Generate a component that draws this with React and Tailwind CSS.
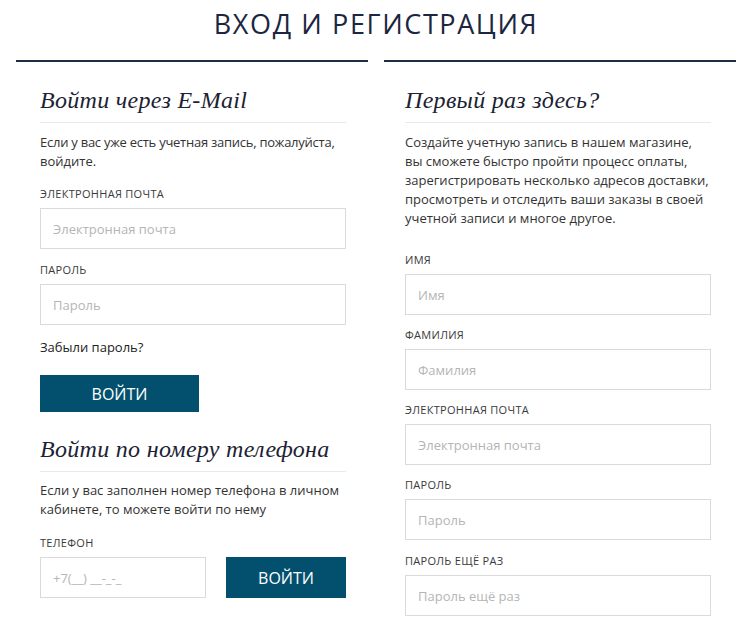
import React from "react";

const sans = "font-['Open_Sans',_'Liberation_Sans',_sans-serif]";
const serif = "font-['Liberation_Serif',_serif]";

const Label = ({ children, className = "" }) => (
  <div className={`text-[11px] leading-[13px] tracking-[0.3px] uppercase text-[#3a3a3a] mb-[8px] ${className}`}>{children}</div>
);

const Field = ({ placeholder, className = "" }) => (
  <input
    placeholder={placeholder}
    className={`h-[41px] border border-[#dadada] bg-white px-[12px] text-[13px] text-[#333] placeholder:text-[#b5b5b5] outline-none ${sans} ${className}`}
  />
);

const Heading = ({ children }) => (
  <div className="border-b border-[#e9e9e9] pb-[8px]">
    <h2 className={`${serif} italic text-[24px] leading-[28px] tracking-[0.3px] text-[#1c2233]`}>{children}</h2>
  </div>
);

export default function App() {
  return (
    <div className={`w-[752px] h-[633px] bg-white overflow-hidden ${sans}`}>
      <h1 className="pt-[8px] text-center text-[27px] leading-[32px] tracking-[1.6px] text-[#1c2640]">
        ВХОД И РЕГИСТРАЦИЯ
      </h1>

      <div className="grid grid-cols-2 gap-[16px] px-[16px] mt-[20px]">
        {/* Login */}
        <div className="border-t-2 border-[#1f2d45] pl-[24px] pt-[24px]">
          <div className="w-[306px]">
            <Heading>Войти через E-Mail</Heading>
            <p className="mt-[10px] text-[13px] leading-[19px] text-[#333]">
              <span className="whitespace-nowrap tracking-[-0.25px]">Если у вас уже есть учетная запись, пожалуйста,</span>
              <br />
              войдите.
            </p>

            <Label className="mt-[16px]">Электронная почта</Label>
            <Field placeholder="Электронная почта" className="w-full" />
            <Label className="mt-[14px]">Пароль</Label>
            <Field placeholder="Пароль" className="w-full" />

            <a className="block mt-[13px] text-[13px] leading-[19px] text-[#222]">Забыли пароль?</a>

            <button className="mt-[18px] w-[159px] h-[37px] bg-[#03506e] text-white text-[16px] uppercase">
              Войти
            </button>

            <div className="mt-[23px]">
              <Heading>Войти по номеру телефона</Heading>
            </div>
            <p className="mt-[9px] text-[13px] leading-[19px] text-[#333]">
              Если у вас заполнен номер телефона в личном кабинете, то можете войти по нему
            </p>

            <Label className="mt-[17px]">Телефон</Label>
            <div className="flex gap-[20px]">
              <Field placeholder="+7(__) __-_-_" className="w-[166px]" />
              <button className="w-[120px] h-[41px] bg-[#03506e] text-white text-[16px] uppercase">
                Войти
              </button>
            </div>
          </div>
        </div>

        {/* Register */}
        <div className="border-t-2 border-[#1f2d45] pl-[21px] pt-[24px]">
          <div className="w-[306px]">
            <Heading>Первый раз здесь?</Heading>
            <p className="mt-[10px] text-[13px] leading-[19px] text-[#333]">
              Создайте учетную запись в нашем магазине,
              <br />
              вы сможете быстро пройти процесс оплаты, зарегистрировать несколько адресов доставки,
              просмотреть и отследить ваши заказы в своей учетной записи и многое другое.
            </p>

            <Label className="mt-[25px]">Имя</Label>
            <Field placeholder="Имя" className="w-full" />
            <Label className="mt-[13px]">Фамилия</Label>
            <Field placeholder="Фамилия" className="w-full" />
            <Label className="mt-[13px]">Электронная почта</Label>
            <Field placeholder="Электронная почта" className="w-full" />
            <Label className="mt-[13px]">Пароль</Label>
            <Field placeholder="Пароль" className="w-full" />
            <Label className="mt-[14px]">Пароль ещё раз</Label>
            <Field placeholder="Пароль ещё раз" className="w-full" />
          </div>
        </div>
      </div>
    </div>
  );
}
